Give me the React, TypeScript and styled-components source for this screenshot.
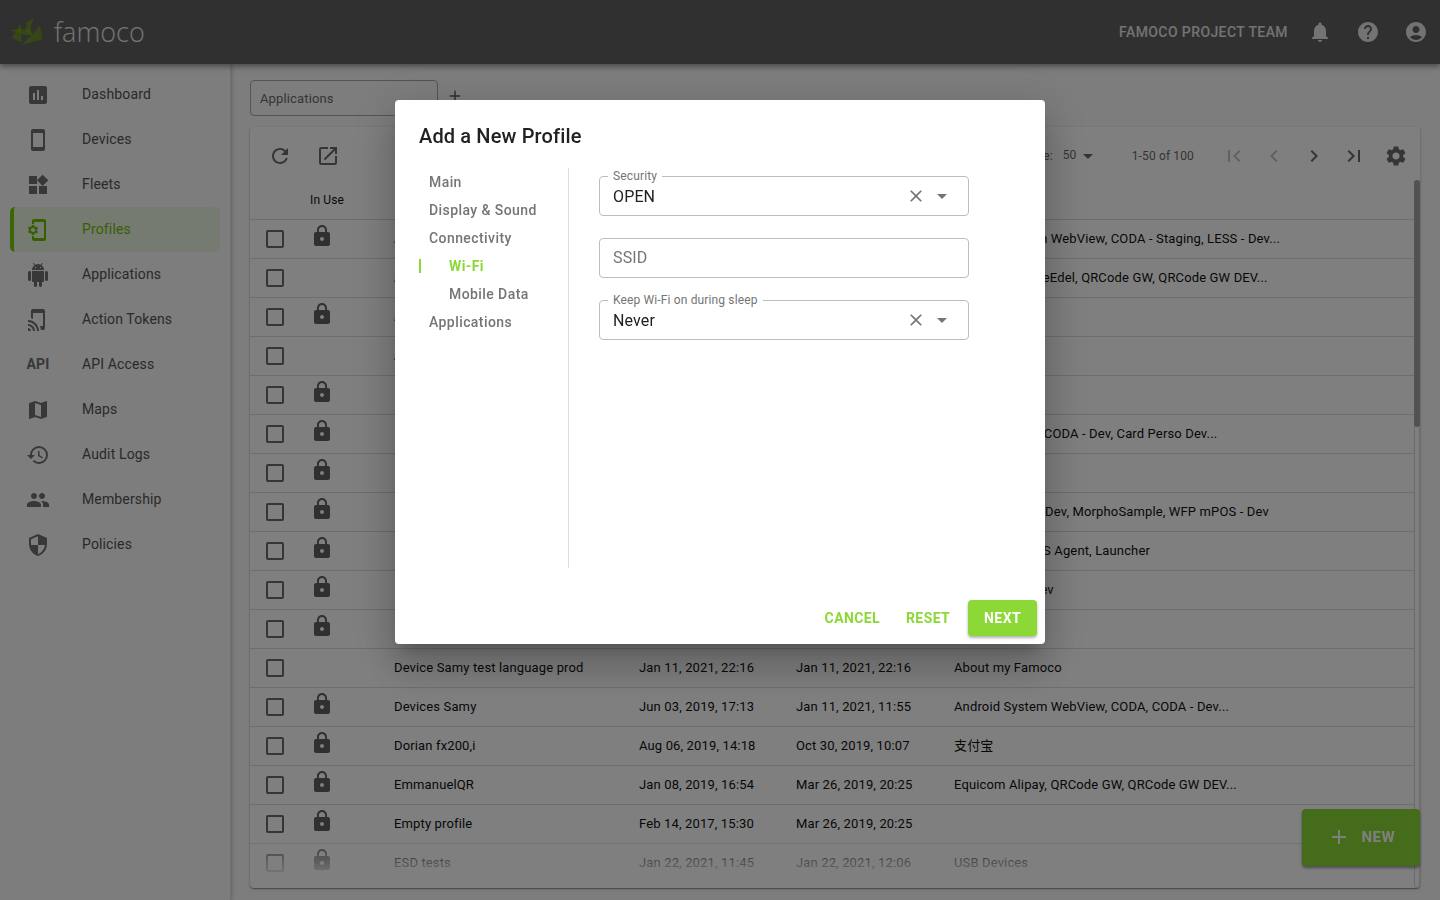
import React from "react";
import styled, { createGlobalStyle, css } from "styled-components";
import {
  MdInsertChart,
  MdStayCurrentPortrait,
  MdWidgets,
  MdTapAndPlay,
  MdMap,
  MdHistory,
  MdPeople,
  MdSecurity,
  MdNotifications,
  MdHelp,
  MdAccountCircle,
  MdRefresh,
  MdOpenInNew,
  MdFirstPage,
  MdLastPage,
  MdChevronLeft,
  MdChevronRight,
  MdSettings,
  MdLock,
  MdAdd,
  MdClose,
  MdArrowDropDown,
} from "react-icons/md";

const brand = "#8bd837";

const GlobalStyle = createGlobalStyle`
  *, *::before, *::after { box-sizing: border-box; }
  body {
    margin: 0;
    background: #fafafa;
    font-family: Roboto, "Noto Sans CJK SC", sans-serif;
    font-size: 14px;
    letter-spacing: 0.01em;
    color: #212121;
  }
  button, input, select { font: inherit; color: inherit; letter-spacing: inherit; }
  button { border: 0; padding: 0; background: none; cursor: pointer; }
`;

const Shell = styled.div`
  display: flex;
  flex-direction: column;
  height: 100vh;
  min-height: 640px;
  overflow: hidden;
`;

const TopBar = styled.header`
  position: relative;
  z-index: 2;
  flex: none;
  display: flex;
  align-items: center;
  justify-content: space-between;
  height: 64px;
  padding-left: 10px;
  background: #616161;
  color: #fafafa;
  box-shadow: 0 2px 4px rgba(0, 0, 0, 0.2), 0 4px 5px rgba(0, 0, 0, 0.14), 0 1px 10px rgba(0, 0, 0, 0.12);
`;

const Brand = styled.a`
  display: flex;
  align-items: center;
  gap: 10px;
  color: #e8e8e8;
  font-family: "Open Sans", sans-serif;
  font-size: 27px;
  font-weight: 300;
  letter-spacing: normal;
  line-height: 32px;
  text-decoration: none;
`;

const Account = styled.div`
  display: flex;
  align-items: center;
  color: #e6e6e6;
`;

const TeamName = styled.button`
  margin-right: 8px;
  font-weight: 500;
  letter-spacing: 0.02857em;
`;

const IconButton = styled.button<{ $size?: number }>`
  display: grid;
  place-items: center;
  flex: none;
  width: ${(p) => p.$size ?? 48}px;
  height: ${(p) => p.$size ?? 48}px;
  font-size: 24px;
  &:disabled { opacity: 0.4; }
`;

const Body = styled.div`
  flex: 1;
  display: flex;
  min-height: 0;
`;

const SideNav = styled.nav`
  flex: none;
  width: 231px;
  padding: 8px 10px;
  border-right: 1px solid #dcdcdc;
  box-shadow: 1px 0 4px rgba(0, 0, 0, 0.2);
`;

const SideIcon = styled.span`
  display: grid;
  place-items: center;
  width: 24px;
  height: 24px;
  margin-right: 32px;
  color: #707070;
  font-size: 24px;
`;

const SideLink = styled.a<{ $active?: boolean }>`
  display: flex;
  align-items: center;
  height: 45px;
  padding-left: 12px;
  border-left: 4px solid transparent;
  border-radius: 5px;
  color: #545454;
  text-decoration: none;
  ${(p) =>
    p.$active &&
    css`
      border-left-color: #74ce00;
      background: #edf7e5;
      color: #6cc000;
      ${SideIcon} { color: inherit; }
    `}
`;

const SideText = styled.span`
  padding-bottom: 2px;
`;

const ApiMark = styled.span`
  padding-bottom: 2px;
  font-size: 14px;
  font-weight: 700;
`;

const Content = styled.main`
  flex: 1;
  display: flex;
  flex-direction: column;
  min-width: 0;
  padding: 16px 20px 12px 19px;
`;

const Filters = styled.div`
  display: flex;
  align-items: center;
  gap: 8px;
  margin-bottom: 11px;
  color: #616161;
`;

const FilterInput = styled.input`
  width: 188px;
  height: 36px;
  padding: 0 9px;
  border: 1px solid #a8a8a8;
  border-radius: 4px;
  background: transparent;
  font-size: 13px;
  &::placeholder { color: #6c6c6c; opacity: 1; }
`;

const AddFilter = styled.button`
  display: grid;
  place-items: center;
  width: 18px;
  height: 32px;
  font-size: 18px;
  align-self: flex-start;
`;

const Card = styled.section`
  flex: 1;
  display: flex;
  flex-direction: column;
  min-height: 0;
  border-radius: 4px;
  background: #fff;
  box-shadow: 0 1px 3px rgba(0, 0, 0, 0.2), 0 1px 1px rgba(0, 0, 0, 0.3);
`;

const Toolbar = styled.div`
  flex: none;
  display: flex;
  align-items: center;
  height: 53px;
  padding: 5px 4px 0 6px;
  color: #6a6a6a;
`;

const PageTools = styled.div`
  display: flex;
  align-items: center;
  margin-left: auto;
  font-size: 12px;
`;

const SizeLabel = styled.label`
  display: flex;
  align-items: center;
  gap: 10px;
`;

const SizeSelect = styled.span`
  display: flex;
  align-items: center;
  margin-right: 32px;
  select {
    width: 37px;
    margin-right: -24px;
    border: 0;
    background: none;
    padding: 0 0 2px;
    appearance: none;
  }
  svg { font-size: 24px; pointer-events: none; }
`;

const PageRange = styled.span`
  margin-right: 20px;
`;

const PagerButtons = styled.div`
  display: flex;
  margin-right: 2px;
`;

const TableArea = styled.div`
  flex: 1;
  display: flex;
  min-height: 0;
`;

const TableClip = styled.div`
  position: relative;
  flex: 1;
  min-width: 0;
  margin-bottom: 8px;
  overflow: hidden;
`;

const Fade = styled.div`
  position: absolute;
  inset: auto 0 0 0;
  height: 44px;
  background: linear-gradient(rgba(255, 255, 255, 0), #fff);
  pointer-events: none;
`;

const ScrollTrack = styled.div`
  flex: none;
  width: 6px;
  border: 1px solid #d6d6d6;
  border-top: 0;
  border-radius: 3px;
`;

const ScrollThumb = styled.div`
  width: 6px;
  height: 35%;
  margin-left: -1px;
  border-radius: 3px;
  background: #a4a4a4;
`;

const Table = styled.table`
  width: 100%;
  table-layout: fixed;
  border-collapse: separate;
  border-spacing: 0;
  font-size: 13px;
  line-height: 16px;
  color: #101010;
  th, td {
    height: 39px;
    padding: 0 10px;
    border-bottom: 1px solid #dcdcdc;
    text-align: left;
    white-space: nowrap;
  }
  th {
    height: 40px;
    font-size: 12px;
    font-weight: 400;
  }
  td:first-child, th:first-child { padding: 0 16px; }
  td:nth-child(2) svg { display: block; margin-bottom: 7px; font-size: 24px; color: #606060; }
`;

const CheckBox = styled.input`
  display: block;
  appearance: none;
  width: 18px;
  height: 18px;
  margin: 0;
  border: 2px solid #6a6a6a;
  border-radius: 2px;
`;

const NewButton = styled.button`
  position: fixed;
  right: 20px;
  bottom: 34px;
  display: flex;
  align-items: center;
  gap: 11px;
  height: 57px;
  padding: 0 25px 2px;
  border-radius: 4px;
  background: ${brand};
  color: #fff;
  font-size: 15px;
  font-weight: 700;
  letter-spacing: 0.02857em;
  box-shadow: 0 2px 3px rgba(0, 0, 0, 0.4);
  svg { font-size: 24px; }
`;

const Backdrop = styled.div`
  position: fixed;
  inset: 0;
  z-index: 10;
  display: flex;
  align-items: flex-start;
  justify-content: center;
  padding: 100px 24px 24px;
  background: rgba(0, 0, 0, 0.5);
`;

const Dialog = styled.div`
  display: flex;
  flex-direction: column;
  width: 650px;
  max-width: 100%;
  border-radius: 4px;
  background: #fff;
  box-shadow: 0 11px 15px -7px rgba(0, 0, 0, 0.2), 0 24px 38px 3px rgba(0, 0, 0, 0.14),
    0 9px 46px 8px rgba(0, 0, 0, 0.12);
`;

const DialogTitle = styled.h2`
  margin: 0;
  padding: 20px 24px 16px;
  font-size: 20px;
  font-weight: 500;
  line-height: 32px;
`;

const DialogBody = styled.div`
  display: flex;
  min-height: 400px;
  padding: 0 24px;
`;

const Steps = styled.nav`
  width: 150px;
  border-right: 1px solid #ddd;
`;

const Step = styled.a<{ $nested?: boolean; $active?: boolean }>`
  display: flex;
  align-items: center;
  height: 28px;
  color: ${(p) => (p.$active ? brand : "#757575")};
  font-weight: ${(p) => (p.$active ? 700 : 500)};
  letter-spacing: 0.03em;
  text-decoration: none;
  &::before {
    content: "";
    width: 2px;
    height: 14px;
    margin-right: ${(p) => (p.$nested ? 28 : 8)}px;
    background: ${(p) => (p.$active ? brand : "transparent")};
  }
`;

const Fields = styled.div`
  display: flex;
  flex-direction: column;
  gap: 22px;
  flex: 1;
  padding: 8px 52px 0 30px;
`;

const FieldBox = styled.div`
  position: relative;
  display: flex;
  align-items: center;
  height: 40px;
  padding-right: 14px;
  border: 1px solid #bdbdbd;
  border-radius: 4px;
  color: #757575;
  font-size: 16px;
  select, input {
    flex: 1;
    min-width: 0;
    height: 100%;
    padding: 0 13px;
    border: 0;
    background: none;
    color: #212121;
    appearance: none;
    outline: 0;
  }
  select { margin-right: -26px; padding-right: 30px; }
  input { padding-bottom: 2px; }
  input::placeholder { color: #757575; opacity: 1; }
`;

const FieldLabel = styled.label`
  position: absolute;
  top: -8px;
  left: 8px;
  padding: 0 5px;
  background: #fff;
  font-size: 12px;
  line-height: 14px;
`;

const ClearButton = styled.button`
  display: grid;
  place-items: center;
  width: 28px;
  height: 28px;
  order: 1;
  margin-right: 26px;
  font-size: 20px;
`;

const DropArrow = styled(MdArrowDropDown)`
  order: 2;
  margin-left: -26px;
  font-size: 24px;
  pointer-events: none;
`;

const Actions = styled.div`
  display: flex;
  justify-content: flex-end;
  gap: 8px;
  padding: 32px 8px 8px;
`;

const ActionButton = styled.button<{ $primary?: boolean }>`
  min-width: 64px;
  height: 36px;
  padding: 0 ${(p) => (p.$primary ? 16 : 8)}px;
  border-radius: 4px;
  background: ${(p) => (p.$primary ? brand : "transparent")};
  box-shadow: ${(p) => (p.$primary ? "0 2px 3px rgba(0, 0, 0, 0.3)" : "none")};
  color: ${(p) => (p.$primary ? "#fff" : brand)};
  font-weight: 700;
  letter-spacing: 0.02857em;
`;

const LogoMark = () => (
  <svg width="34" height="30" viewBox="30 51 102 90" aria-hidden="true">
    <g fill="#78b400" fillOpacity="0.55">
      <path d="M31 91 58 87 92 90 97 104 76 106 58 98Z" />
      <path d="M62 72 65 127 36 113Z" />
      <path d="M101 54 91 84 94 108 76 90 81 66Z" />
      <path d="M120 78 127 118 66 135Z" />
    </g>
  </svg>
);

const AndroidRobot = () => (
  <svg width="24" height="24" viewBox="0 0 24 24" fill="currentColor" aria-hidden="true">
    <path d="M6 18c0 .55.45 1 1 1h1v3.5c0 .83.67 1.5 1.5 1.5s1.5-.67 1.5-1.5V19h2v3.5c0 .83.67 1.5 1.5 1.5s1.5-.67 1.5-1.5V19h1c.55 0 1-.45 1-1V8H6v10zM3.5 8C2.67 8 2 8.67 2 9.5v7c0 .83.67 1.5 1.5 1.5S5 17.33 5 16.5v-7C5 8.67 4.33 8 3.5 8zm17 0c-.83 0-1.5.67-1.5 1.5v7c0 .83.67 1.5 1.5 1.5s1.5-.67 1.5-1.5v-7c0-.83-.67-1.5-1.5-1.5zm-4.97-5.84l1.3-1.3c.2-.2.2-.51 0-.71-.2-.2-.51-.2-.71 0l-1.48 1.48C13.85 1.23 12.95 1 12 1c-.96 0-1.86.23-2.66.63L7.85.15c-.2-.2-.51-.2-.71 0-.2.2-.2.51 0 .71l1.31 1.31C6.97 3.26 6 5.01 6 7h12c0-1.99-.97-3.75-2.47-4.84zM10 5H9V4h1v1zm5 0h-1V4h1v1z" />
  </svg>
);

const PhoneSetup = () => (
  <svg width="24" height="24" viewBox="1 0 24 24" fill="currentColor" aria-hidden="true">
    <path d="M11.8 12.5v-1l1.1-.8c.1-.1.1-.2.1-.3l-1-1.7c-.1-.1-.2-.2-.3-.1l-1.3.4c-.3-.2-.6-.4-.9-.5l-.2-1.3c0-.1-.1-.2-.3-.2H7c-.1 0-.2.1-.3.2l-.2 1.3c-.3.1-.6.3-.9.5l-1.3-.5c-.1 0-.2 0-.3.1l-1 1.7c-.1.1 0 .2.1.3l1.1.8v1l-1.1.8c-.1.2-.1.3-.1.4l1 1.7c.1.1.2.2.3.1l1.4-.4c.3.2.6.4.9.5l.2 1.3c-.1.1.1.2.2.2h2c.1 0 .2-.1.3-.2l.2-1.3c.3-.1.6-.3.9-.5l1.3.5c.1 0 .2 0 .3-.1l1-1.7c.1-.1 0-.2-.1-.3l-1.1-.9zM8 14c-1.1 0-2-.9-2-2s.9-2 2-2 2 .9 2 2-.9 2-2 2z" />
    <path d="M19 1H9c-1.1 0-2 .9-2 2v3h2V4h10v16H9v-2H7v3c0 1.1.9 2 2 2h10c1.1 0 2-.9 2-2V3c0-1.1-.9-2-2-2z" />
  </svg>
);

const sideItems: { label: string; icon: React.ReactNode; active?: boolean }[] = [
  { label: "Dashboard", icon: <MdInsertChart /> },
  { label: "Devices", icon: <MdStayCurrentPortrait /> },
  { label: "Fleets", icon: <MdWidgets /> },
  { label: "Profiles", icon: <PhoneSetup />, active: true },
  { label: "Applications", icon: <AndroidRobot /> },
  { label: "Action Tokens", icon: <MdTapAndPlay /> },
  { label: "API Access", icon: <ApiMark>API</ApiMark> },
  { label: "Maps", icon: <MdMap /> },
  { label: "Audit Logs", icon: <MdHistory /> },
  { label: "Membership", icon: <MdPeople /> },
  { label: "Policies", icon: <MdSecurity /> },
];

type Row = { locked: boolean; name?: string; created?: string; updated?: string; apps?: string };

const rows: Row[] = [
  { locked: true, name: "A", apps: "Android System WebView, CODA - Staging, LESS - Dev..." },
  { locked: false, name: "A", apps: "CODA, FamocoeEdel, QRCode GW, QRCode GW DEV..." },
  { locked: true, name: "A" },
  { locked: false, name: "A" },
  { locked: true },
  { locked: true, apps: "Alipay QR, Pay, CODA - Dev, Card Perso Dev..." },
  { locked: true },
  { locked: true, apps: "Famoco Base - Dev, MorphoSample, WFP mPOS - Dev" },
  { locked: true, apps: "FX Famoco FMS Agent, Launcher" },
  { locked: true, apps: "Famoco Kit - Dev" },
  { locked: true },
  {
    locked: false,
    name: "Device Samy test language prod",
    created: "Jan 11, 2021, 22:16",
    updated: "Jan 11, 2021, 22:16",
    apps: "About my Famoco",
  },
  {
    locked: true,
    name: "Devices Samy",
    created: "Jun 03, 2019, 17:13",
    updated: "Jan 11, 2021, 11:55",
    apps: "Android System WebView, CODA, CODA - Dev...",
  },
  {
    locked: true,
    name: "Dorian fx200,i",
    created: "Aug 06, 2019, 14:18",
    updated: "Oct 30, 2019, 10:07",
    apps: "支付宝",
  },
  {
    locked: true,
    name: "EmmanuelQR",
    created: "Jan 08, 2019, 16:54",
    updated: "Mar 26, 2019, 20:25",
    apps: "Equicom Alipay, QRCode GW, QRCode GW DEV...",
  },
  { locked: true, name: "Empty profile", created: "Feb 14, 2017, 15:30", updated: "Mar 26, 2019, 20:25" },
  {
    locked: true,
    name: "ESD tests",
    created: "Jan 22, 2021, 11:45",
    updated: "Jan 22, 2021, 12:06",
    apps: "USB Devices",
  },
];

const steps = [
  { label: "Main" },
  { label: "Display & Sound" },
  { label: "Connectivity" },
  { label: "Wi-Fi", nested: true, active: true },
  { label: "Mobile Data", nested: true },
  { label: "Applications" },
];

const SelectField = ({ id, label, value }: { id: string; label: string; value: string }) => (
  <FieldBox>
    <FieldLabel htmlFor={id}>{label}</FieldLabel>
    <select id={id} defaultValue={value}>
      <option>{value}</option>
    </select>
    <ClearButton type="button" aria-label={`Clear ${label}`}>
      <MdClose />
    </ClearButton>
    <DropArrow />
  </FieldBox>
);

export default function App() {
  return (
    <>
      <GlobalStyle />
      <Shell>
        <TopBar>
          <Brand href="#">
            <LogoMark />
            famoco
          </Brand>
          <Account>
            <TeamName>FAMOCO PROJECT TEAM</TeamName>
            <IconButton aria-label="Notifications"><MdNotifications /></IconButton>
            <IconButton aria-label="Help"><MdHelp /></IconButton>
            <IconButton aria-label="Account"><MdAccountCircle /></IconButton>
          </Account>
        </TopBar>
        <Body>
          <SideNav>
            {sideItems.map((item) => (
              <SideLink key={item.label} href="#" $active={item.active}>
                <SideIcon>{item.icon}</SideIcon>
                <SideText>{item.label}</SideText>
              </SideLink>
            ))}
          </SideNav>
          <Content>
            <Filters>
              <FilterInput placeholder="Applications" aria-label="Applications" />
              <AddFilter aria-label="Add filter"><MdAdd /></AddFilter>
            </Filters>
            <Card>
              <Toolbar>
                <IconButton aria-label="Refresh"><MdRefresh /></IconButton>
                <IconButton aria-label="Open in new window"><MdOpenInNew /></IconButton>
                <PageTools>
                  <SizeLabel>
                    Rows per page:
                    <SizeSelect>
                      <select defaultValue="50">
                        <option>50</option>
                      </select>
                      <MdArrowDropDown />
                    </SizeSelect>
                  </SizeLabel>
                  <PageRange>1-50 of 100</PageRange>
                  <PagerButtons>
                    <IconButton $size={40} disabled aria-label="First page"><MdFirstPage /></IconButton>
                    <IconButton $size={40} disabled aria-label="Previous page"><MdChevronLeft /></IconButton>
                    <IconButton $size={40} aria-label="Next page"><MdChevronRight /></IconButton>
                    <IconButton $size={40} aria-label="Last page"><MdLastPage /></IconButton>
                  </PagerButtons>
                  <IconButton $size={40} aria-label="Settings"><MdSettings /></IconButton>
                </PageTools>
              </Toolbar>
              <TableArea>
                <TableClip>
                  <Table>
                    <colgroup>
                      <col width="50" />
                      <col width="84" />
                      <col width="245" />
                      <col width="157" />
                      <col width="158" />
                      <col />
                    </colgroup>
                    <thead>
                      <tr>
                        <th />
                        <th>In Use</th>
                        <th />
                        <th />
                        <th />
                        <th />
                      </tr>
                    </thead>
                    <tbody>
                      {rows.map((row, i) => (
                        <tr key={i}>
                          <td><CheckBox type="checkbox" aria-label={`Select row ${i + 1}`} /></td>
                          <td>{row.locked && <MdLock />}</td>
                          <td>{row.name}</td>
                          <td>{row.created}</td>
                          <td>{row.updated}</td>
                          <td>{row.apps}</td>
                        </tr>
                      ))}
                    </tbody>
                  </Table>
                  <Fade />
                </TableClip>
                <ScrollTrack>
                  <ScrollThumb />
                </ScrollTrack>
              </TableArea>
            </Card>
          </Content>
        </Body>
        <NewButton>
          <MdAdd />
          NEW
        </NewButton>
      </Shell>
      <Backdrop>
        <Dialog role="dialog" aria-modal="true" aria-labelledby="dialog-title">
          <DialogTitle id="dialog-title">Add a New Profile</DialogTitle>
          <DialogBody>
            <Steps>
              {steps.map((step) => (
                <Step key={step.label} href="#" $nested={step.nested} $active={step.active}>
                  {step.label}
                </Step>
              ))}
            </Steps>
            <Fields>
              <SelectField id="security" label="Security" value="OPEN" />
              <FieldBox>
                <input placeholder="SSID" aria-label="SSID" />
              </FieldBox>
              <SelectField id="keep-on" label="Keep Wi-Fi on during sleep" value="Never" />
            </Fields>
          </DialogBody>
          <Actions>
            <ActionButton>CANCEL</ActionButton>
            <ActionButton>RESET</ActionButton>
            <ActionButton $primary>NEXT</ActionButton>
          </Actions>
        </Dialog>
      </Backdrop>
    </>
  );
}
